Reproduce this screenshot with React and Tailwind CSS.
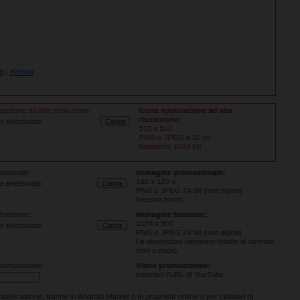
import React from 'react';

// Pagina "Risorse grafiche" della console sviluppatori, coperta da un velo scuro (dialog aperto).

const FileRow = ({ offset = 'w-[97px]', text = 'e selezionato' }) => (
    <div className="flex items-center">
        <span className={`${offset} shrink-0 text-[7px] leading-[9px]`}>{text}</span>
        <button className="h-[10px] w-[30px] shrink-0 rounded-[2px] border border-[#9a9a9a] bg-[#f3f3f3] text-[7px] leading-none text-[#222]">
            Carica
        </button>
    </div>
);

const Specs = ({ title, lines, className = '' }) => (
    <div className={className}>
        <div className="font-bold">{title}</div>
        {lines.map((l) => (
            <div key={l}>{l}</div>
        ))}
    </div>
);

export default function App() {
    return (
        <div className="relative h-[300px] w-[300px] overflow-hidden bg-white font-['Liberation_Sans',Arial,sans-serif] text-[7.6px] leading-[9px] text-[#444]">
            {/* box screenshot */}
            <div className="h-[96px] w-[276px] border-b border-r border-[#bb5a5a] pt-[67px]">
                <a className="ml-[-1px] text-[#0066cc] underline">a</a>
                <span className="text-[#888]"> | </span>
                <a className="text-[#0066cc] underline">elimina</a>
            </div>

            {/* icona ad alta risoluzione (errore) */}
            <div className="mt-[7px] flex h-[59px] w-[276px] border-y border-r border-[#bb5a5a] pt-[1.5px] text-[#c62828]">
                <div className="w-[139px] shrink-0">
                    <div>cazione ad alta risoluzione:</div>
                    <div className="mt-[1.5px] text-[#444]">
                        <FileRow offset="w-[100px]" text="o selezionato" />
                    </div>
                </div>
                <Specs
                    className="w-[132px]"
                    title="Icona applicazione ad alta risoluzione:"
                    lines={['512 x 512', 'PNG o JPEG a 32 bit', 'Massimo: 1024 kB']}
                />
            </div>

            {/* immagine promozionale */}
            <div className="mt-[6px] flex">
                <div className="w-[136px] shrink-0">
                    <div>ozionale:</div>
                    <div className="mt-[1px]">
                        <FileRow />
                    </div>
                </div>
                <Specs
                    className="w-[145px]"
                    title="Immagine promozionale:"
                    lines={['180 x 120 o', 'PNG o JPEG 24 bit (non alpha)', 'Nessun bordo']}
                />
            </div>

            {/* immagine funzione */}
            <div className="mt-[5.5px] flex">
                <div className="w-[136px] shrink-0">
                    <div>funzione:</div>
                    <div className="mt-[1.5px]">
                        <FileRow />
                    </div>
                </div>
                <Specs
                    className="w-[145px]"
                    title="Immagine funzione:"
                    lines={['1024 x 500', 'PNG o JPEG 24 bit (non alpha)', 'Le dimensioni verranno ridotte al formato mini o micro']}
                />
            </div>

            {/* video promozionale */}
            <div className="mt-[6px] flex">
                <div className="w-[136px] shrink-0">
                    <div>romozionale:</div>
                    <input className="mt-[2.5px] ml-[-1px] block h-[11px] w-[41px] border border-[#aaa] bg-white" />
                </div>
                <Specs className="w-[145px]" title="Video promozionale:" lines={["Inserisci l'URL di YouTube"]} />
            </div>

            <p className="mt-[8.5px] whitespace-nowrap">
                applicazione, tranne in Android Market o in proprietà online o per cellulari di
            </p>

            {/* velo della finestra modale */}
            <div className="absolute inset-0 bg-black/85" />
        </div>
    );
}
